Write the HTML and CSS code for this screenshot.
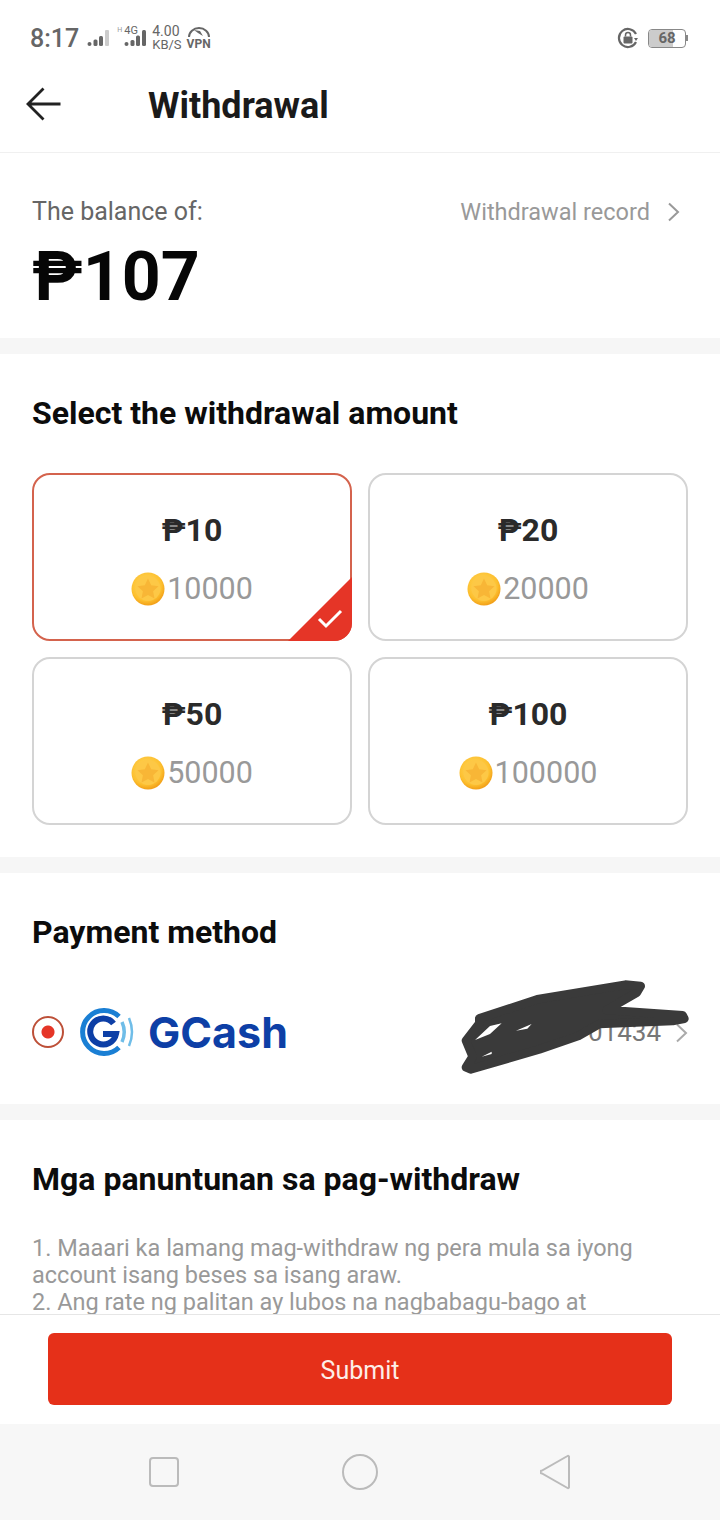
FILE: index.html
```html
<!DOCTYPE html>
<html lang="en">
<head>
  <meta charset="UTF-8" />
  <meta name="viewport" content="width=device-width, initial-scale=1.0"/>
  <title>Withdrawal</title>
  <link rel="stylesheet" href="styles.css">
</head>
<body>
  <svg class="defs" width="0" height="0">
    <defs>
      <radialGradient id="coinFill" cx="45%" cy="40%" r="65%">
        <stop offset="0" stop-color="#ffdc6a"/>
        <stop offset="0.7" stop-color="#fdc02f"/>
        <stop offset="1" stop-color="#ee9410"/>
      </radialGradient>
      <symbol id="coin" viewBox="0 0 34 34">
        <circle cx="17" cy="17" r="16.5" fill="url(#coinFill)"/>
        <circle cx="17" cy="16.500" r="12.5" fill="#fdc846"/>
        <path d="M17 6.500l3.200 6.800 7.300.9-5.400 5 1.400 7.300-6.500-3.600-6.500 3.600 1.400-7.300-5.400-5 7.300-.9z" fill="#f8b636"/>
      </symbol>
    </defs>
  </svg>

  <div class="statusbar">
    <div class="status-left">
      <span class="clock">8:17</span>
      <svg class="signal" width="24" height="18" viewBox="0 0 24 18">
        <circle cx="2.5" cy="15" r="2" fill="#666"/>
        <rect x="6.5" y="10.5" width="4" height="6.5" rx="1.5" fill="#666"/>
        <rect x="12" y="7" width="4" height="10" rx="1.5" fill="#666"/>
        <rect x="18" y="1" width="4" height="16" rx="1" fill="#ccc"/>
      </svg>
      <span class="h-mark">H</span>
      <div class="net">
        <span class="net-label">4G</span>
        <svg width="24" height="18" viewBox="0 0 24 18">
          <circle cx="2.5" cy="15" r="2" fill="#666"/>
          <rect x="6.5" y="11" width="4" height="6" rx="1.5" fill="#666"/>
          <rect x="12" y="6.5" width="4" height="10.5" rx="1.5" fill="#666"/>
          <rect x="18" y="1" width="4" height="16" rx="1.5" fill="#666"/>
        </svg>
      </div>
      <div class="speed"><span>4.00</span><span class="speed-unit">KB/S</span></div>
      <div class="vpn">
        <svg width="24" height="11" viewBox="0 0 24 11">
          <path d="M2 10a10 9 0 0 1 20 0" fill="none" stroke="#666" stroke-width="2"/>
          <path d="M7 3l6 1 3 5-5-3z" fill="#666"/>
        </svg>
        <span>VPN</span>
      </div>
    </div>
    <div class="status-right">
      <svg width="22" height="22" viewBox="0 0 22 22">
        <path d="M19 15a9 9 0 1 1 0-8" fill="none" stroke="#666" stroke-width="2.2"/>
        <path d="M17 11h4l-2 3z" fill="#666"/>
        <rect x="6.5" y="9.5" width="9" height="7" rx="1" fill="#666"/>
        <path d="M8.5 9.5V8a2.5 2.5 0 0 1 5 0v1.5" fill="none" stroke="#666" stroke-width="1.5"/>
      </svg>
      <div class="battery"><div class="battery-level" style="width:68%"></div><span>68</span></div>
      <div class="battery-tip"></div>
    </div>
  </div>

  <div class="topbar">
    <svg class="back" width="36" height="34" viewBox="0 0 36 34">
      <path d="M34.500 17H2.500M17.500 1.500L2 17l15.500 15.500" fill="none" stroke="#222" stroke-width="2.800"/>
    </svg>
    <h1>Withdrawal</h1>
  </div>

  <div class="content">
    <section class="block balance">
      <div class="balance-row">
        <span class="balance-label">The balance of:</span>
        <span class="record">Withdrawal record
          <svg width="13" height="20" viewBox="0 0 13 20"><path d="M2 1.500L11 10l-9 8.500" fill="none" stroke="#999" stroke-width="2"/></svg>
        </span>
      </div>
      <div class="balance-value">₱107</div>
    </section>

    <section class="block amounts">
      <h2>Select the withdrawal amount</h2>
      <div class="amount-grid">
        <div class="amount selected">
          <div class="peso">₱10</div>
          <div class="coins"><svg class="coin"><use href="#coin"/></svg>10000</div>
          <svg class="tick" width="64" height="64" viewBox="0 0 64 64">
            <path d="M64 0V46a18 18 0 0 1-18 18H0z" fill="#e53527"/>
            <path d="M31 42l7 7 15-15" fill="none" stroke="#fff" stroke-width="3"/>
          </svg>
        </div>
        <div class="amount">
          <div class="peso">₱20</div>
          <div class="coins"><svg class="coin"><use href="#coin"/></svg>20000</div>
        </div>
        <div class="amount">
          <div class="peso">₱50</div>
          <div class="coins"><svg class="coin"><use href="#coin"/></svg>50000</div>
        </div>
        <div class="amount">
          <div class="peso">₱100</div>
          <div class="coins"><svg class="coin"><use href="#coin"/></svg>100000</div>
        </div>
      </div>
    </section>

    <section class="block payment">
      <h2>Payment method</h2>
      <div class="pay-row">
        <span class="radio"></span>
        <svg class="gcash-mark" width="58" height="48" viewBox="0 0 58 48">
          <path d="M40 8.500A21.500 21.500 0 1 0 40 39.500" fill="none" stroke="#1a7fd4" stroke-width="5"/>
          <path d="M34.500 15.500A13 13 0 1 0 37 26H24" fill="none" stroke="#0d3fa6" stroke-width="6"/>
          <path d="M43 14q4.500 10 0 20" fill="none" stroke="#6fbde8" stroke-width="3.500"/>
          <path d="M50 10q6 14 0 28" fill="none" stroke="#6fbde8" stroke-width="2.500"/>
        </svg>
        <span class="gcash-name">GCash</span>
        <span class="account">01434</span>
        <svg class="pay-arrow" width="13" height="20" viewBox="0 0 13 20"><path d="M2 1.500L11 10l-9 8.500" fill="none" stroke="#aaa" stroke-width="2"/></svg>
        <svg class="scribble" width="270" height="130" viewBox="0 0 810 390">
          <path d="M118 175L292 118L556 74L602 78L590 98L500 150L728 166L733 176L698 183L478 192L415 228L298 268L92 328L78 322L98 290L78 242L118 190z" fill="#3a3a3a" stroke="#3a3a3a" stroke-width="26" stroke-linejoin="round"/>
          <path d="M105 240L150 198L185 190L150 222zM228 212L275 192L262 206zM125 290L155 275L155 282z" fill="#fff"/>
        </svg>
      </div>
    </section>

    <section class="block rules">
      <h2>Mga panuntunan sa pag-withdraw</h2>
      <p>1. Maaari ka lamang mag-withdraw ng pera mula sa iyong account isang beses sa isang araw.<br>
      2. Ang rate ng palitan ay lubos na nagbabagu-bago at</p>
    </section>
  </div>

  <div class="footer">
    <button class="submit">Submit</button>
  </div>

  <div class="navbar">
    <svg width="30" height="30" viewBox="0 0 30 30"><rect x="1" y="1" width="28" height="28" rx="3" fill="none" stroke="#bbb" stroke-width="2"/></svg>
    <svg width="36" height="36" viewBox="0 0 36 36"><circle cx="18" cy="18" r="17" fill="none" stroke="#bbb" stroke-width="2"/></svg>
    <svg width="32" height="36" viewBox="0 0 32 36"><path d="M29 2.500a1 1 0 0 0-1.500-.5L2 16.500a1.500 1.500 0 0 0 0 3L27.500 34a1 1 0 0 0 1.500-.5z" fill="none" stroke="#bbb" stroke-width="2"/></svg>
  </div>
</body>
</html>
```

FILE: styles.css
```css
* {
  box-sizing: border-box;
}
body {
  margin: 0;
  width: 720px;
  height: 1520px;
  overflow: hidden;
  display: flex;
  flex-direction: column;
  background: #fff;
  color: #111;
  font-family: Roboto, "Noto Sans", sans-serif;
}
.defs {
  position: absolute;
}
.statusbar {
  height: 76px;
  flex: none;
  padding: 0 30px;
  display: flex;
  justify-content: space-between;
  align-items: center;
  color: #666;
}
.status-left, .status-right {
  display: flex;
  align-items: center;
}
.clock {
  font-size: 25px;
  font-weight: 500;
}
.signal {
  margin-left: 8px;
}
.h-mark {
  font-size: 7px;
  color: #999;
  margin: 0 0 16px 6px;
}
.net {
  position: relative;
  margin-left: 2px;
  display: flex;
  align-items: flex-end;
}
.net-label {
  position: absolute;
  top: -5px;
  left: 0;
  font-size: 11px;
}
.speed {
  display: flex;
  flex-direction: column;
  font-size: 14px;
  line-height: 13px;
  margin-left: 4px;
}
.speed-unit {
  font-size: 13px;
}
.vpn {
  display: flex;
  flex-direction: column;
  align-items: center;
  font-size: 12px;
  line-height: 12px;
  font-weight: 700;
  margin-left: 5px;
}
.status-right {
  padding-right: 2px;
}
.battery {
  position: relative;
  width: 38px;
  height: 19px;
  margin-left: 9px;
  border: 1px solid #888;
  border-radius: 4px;
  overflow: hidden;
  text-align: center;
  font-size: 15px;
  line-height: 17px;
  font-weight: 700;
}
.battery span {
  position: relative;
}
.battery-level {
  position: absolute;
  left: 0;
  top: 0;
  bottom: 0;
  background: #ccc;
}
.battery-tip {
  width: 2px;
  height: 6px;
  background: #888;
}
.topbar {
  height: 77px;
  flex: none;
  display: flex;
  align-items: center;
  padding: 0 0 18px 26px;
  border-bottom: 1px solid #f0f0f0;
}
.back {
  margin-top: -3px;
}
.topbar h1 {
  margin: 2px 0 0 86px;
  font-size: 36px;
  font-weight: 700;
  color: #1a1a1a;
}
.content {
  flex: 1;
  min-height: 0;
  overflow: hidden;
  background: #f6f6f6;
}
.block {
  background: #fff;
  margin-bottom: 16px;
  padding: 0 32px;
}
.block h2 {
  margin: 0;
  font-size: 32px;
  line-height: 40px;
  font-weight: 700;
  color: #0c0c0c;
}
.balance {
  height: 185px;
  padding-top: 43px;
}
.balance-row {
  display: flex;
  justify-content: space-between;
  align-items: center;
  padding-right: 8px;
}
.balance-label {
  font-size: 25px;
  line-height: 32px;
  color: #666;
}
.record {
  font-size: 23.5px;
  color: #999;
  display: flex;
  align-items: center;
  gap: 17px;
}
.balance-value {
  font-size: 68px;
  line-height: 78px;
  margin-top: 10px;
  font-weight: 700;
  color: #060606;
}
.amounts {
  height: 503px;
  padding-top: 39px;
}
.amount-grid {
  display: grid;
  grid-template-columns: 320px 320px;
  grid-auto-rows: 168px;
  gap: 16px;
  margin-top: 40px;
}
.amount {
  position: relative;
  border: 2px solid #d4d4d4;
  border-radius: 18px;
  display: flex;
  flex-direction: column;
  align-items: center;
  padding-top: 35px;
}
.amount.selected {
  border-color: #d4634d;
}
.peso {
  font-size: 32px;
  line-height: 40px;
  font-weight: 700;
  color: #2a2a2a;
}
.coins {
  display: flex;
  align-items: center;
  margin-top: 19px;
  font-size: 30.5px;
  line-height: 40px;
  color: #999;
}
.coin {
  width: 34px;
  height: 34px;
  margin-right: 2px;
}
.tick {
  position: absolute;
  right: -2px;
  bottom: -2px;
}
.payment {
  height: 231px;
  padding-top: 39px;
}
.pay-row {
  position: relative;
  display: flex;
  align-items: center;
  height: 60px;
  margin-top: 50px;
}
.radio {
  width: 32px;
  height: 32px;
  border: 2.500px solid #bd5038;
  border-radius: 50%;
  background: radial-gradient(circle, #e53527 0 6px, #fff 7px);
}
.gcash-mark {
  margin-left: 15px;
}
.gcash-name {
  margin-left: 11px;
  font-family: Inter, Lato, sans-serif;
  font-size: 43px;
  font-weight: 700;
  color: #0d3fa6;
}
.account {
  margin-left: auto;
  font-size: 26px;
  color: #777;
}
.pay-arrow {
  margin: 2px 0 0 14px;
}
.scribble {
  position: absolute;
  left: 408px;
  top: -42px;
}
.rules {
  padding-top: 39px;
}
.rules p {
  margin: 36px 0 0;
  font-size: 23.5px;
  line-height: 27px;
  color: #999;
}
.footer {
  height: 110px;
  flex: none;
  padding: 18px 48px 0;
  background: #fff;
  border-top: 1px solid #e6e6e6;
}
.submit {
  width: 100%;
  height: 72px;
  padding: 2px 0 0;
  border: none;
  border-radius: 6px;
  background: #e53019;
  color: #fdeee8;
  font-family: inherit;
  font-size: 25px;
}
.navbar {
  height: 96px;
  flex: none;
  background: #f7f7f7;
  display: flex;
  align-items: center;
  padding-left: 149px;
  padding-right: 148px;
  justify-content: space-between;
}
```
